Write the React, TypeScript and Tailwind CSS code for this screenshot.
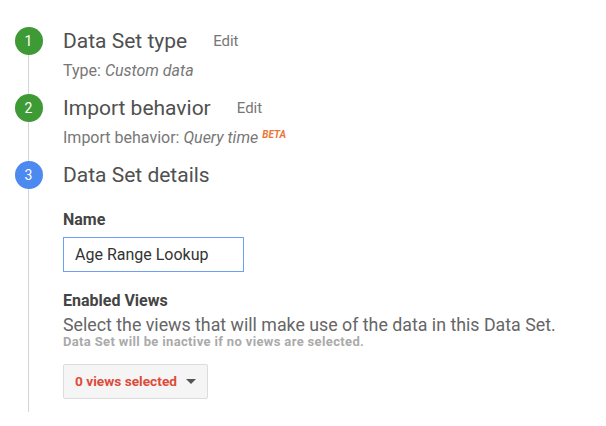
import React from 'react';

const font = { fontFamily: 'Roboto, "Liberation Sans", sans-serif' };

const StepCircle = ({ n, color }: { n: number; color: string }) => (
  <div
    className={`flex h-[28px] w-[28px] shrink-0 items-center justify-center rounded-full text-[14px] text-white ${color}`}
  >
    {n}
  </div>
);

const Step = ({
  n,
  color,
  children,
}: {
  n: number;
  color: string;
  children: React.ReactNode;
}) => (
  <div className="flex">
    <div className="flex w-[57px] flex-col items-center">
      <StepCircle n={n} color={color} />
      <div className="w-px flex-1 bg-[#d4d4d4]" />
    </div>
    <div className="ml-[6px] flex-1">{children}</div>
  </div>
);

const App = () => {
  return (
    <div className="h-[426px] w-[606px] bg-white pt-[27px]" style={font}>
      <Step n={1} color="bg-[#3d9a35]">
        <div className="flex h-[28px] items-center pt-[1px]">
          <span className="text-[21px] text-[#505050]">Data Set type</span>
          <span className="ml-[26px] text-[15px] text-[#777]">Edit</span>
        </div>
        <div className="mt-[6px] pb-[13px] text-[16px] leading-[20px] text-[#777]">
          Type: <i>Custom data</i>
        </div>
      </Step>
      <Step n={2} color="bg-[#3d9a35]">
        <div className="flex h-[28px] items-center pt-[1px]">
          <span className="text-[21px] text-[#505050]">Import behavior</span>
          <span className="ml-[26px] text-[15px] text-[#777]">Edit</span>
        </div>
        <div className="mt-[6px] pb-[13px] text-[16px] leading-[20px] text-[#777]">
          Import behavior: <i>Query time</i>{' '}
          <sup className="text-[10px] font-bold italic text-[#e8763a]">BETA</sup>
        </div>
      </Step>
      <Step n={3} color="bg-[#4d8af0]">
        <div className="flex h-[28px] items-center pt-[1px]">
          <span className="text-[21px] text-[#505050]">Data Set details</span>
        </div>
        <div className="mt-[22px] text-[16px] font-bold leading-[18px] text-[#444]">Name</div>
        <input
          className="mt-[8px] h-[35px] w-[181px] border border-[#6d9ff5] px-[11px] text-[16px] text-[#333] outline-none"
          defaultValue="Age Range Lookup"
        />
        <div className="mt-[20px] text-[16px] font-bold leading-[18px] text-[#444]">
          Enabled Views
        </div>
        <div className="mt-[6px] text-[17.8px] leading-[18px] text-[#666]">
          Select the views that will make use of the data in this Data Set.
        </div>
        <div className="text-[13px] font-bold leading-[16px] tracking-[0.35px] text-[#aaa]">
          Data Set will be inactive if no views are selected.
        </div>
        <button className="mb-[13px] mt-[14px] flex h-[35px] w-[145px] items-center rounded-[2px] border border-[#dcdcdc] bg-[#f5f5f5] pl-[11px] text-[13.7px] font-bold text-[#dd4b39]">
          0 views selected
          <svg className="ml-[9px]" width="10" height="5" viewBox="0 0 10 5">
            <path d="M0 0h10L5 5z" fill="#555" />
          </svg>
        </button>
      </Step>
    </div>
  );
};

export default App;
